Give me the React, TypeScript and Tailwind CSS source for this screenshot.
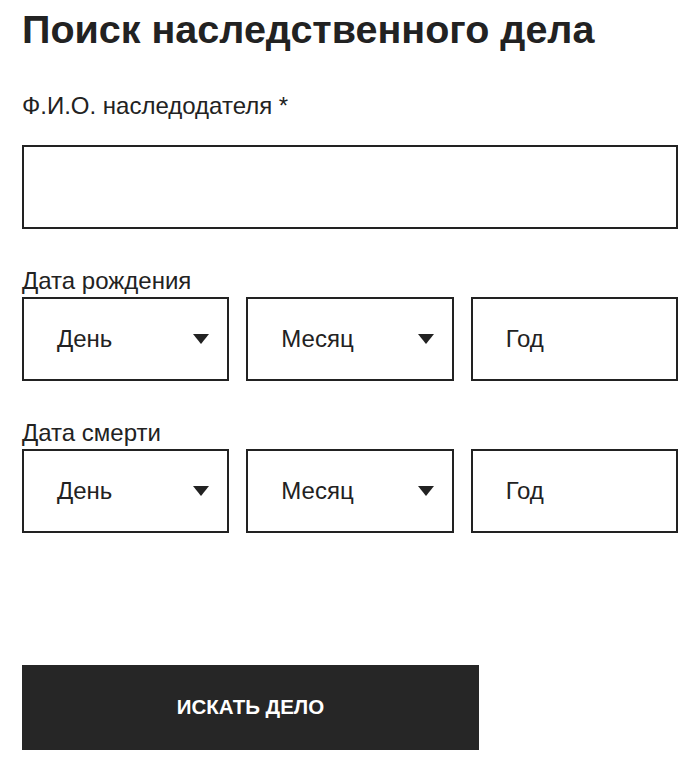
const font = { fontFamily: '"Liberation Sans", Arial, sans-serif' };

const boxClass =
  "flex h-[84px] items-center border-2 border-[#222] bg-white pl-[33px] pr-[18px] text-[24px] text-[#222]";

function Caret() {
  return (
    <svg width="16" height="10" viewBox="0 0 16 10" aria-hidden>
      <path d="M0 0 H16 L8 10 Z" fill="#222" />
    </svg>
  );
}

function SelectBox({ label }: { label: string }) {
  return (
    <div className={`${boxClass} justify-between`}>
      <span>{label}</span>
      <Caret />
    </div>
  );
}

function DateRow({ title }: { title: string }) {
  return (
    <div>
      <p className="text-[24px] leading-[28px] text-[#222]">{title}</p>
      <div className="mt-[2px] grid grid-cols-3 gap-[17px]">
        <SelectBox label="День" />
        <SelectBox label="Месяц" />
        <div className={boxClass}>Год</div>
      </div>
    </div>
  );
}

export default function App() {
  return (
    <div className="min-h-[772px] w-[700px] bg-white pl-[22px] pr-[22px] pt-[6px]" style={font}>
      <h1 className="text-[39.5px] font-bold leading-[46px] text-[#222]">Поиск наследственного дела</h1>

      <p className="mt-[40px] text-[24px] leading-[28px] text-[#222]">Ф.И.О. наследодателя *</p>
      <div className="mt-[25px] h-[84px] border-2 border-[#222] bg-white" />

      <div className="mt-[38px]">
        <DateRow title="Дата рождения" />
      </div>
      <div className="mt-[38px]">
        <DateRow title="Дата смерти" />
      </div>

      <button
        type="button"
        className="mt-[132px] flex h-[85px] w-[457px] items-center justify-center bg-[#262626] text-[20.5px] font-bold text-white"
      >
        ИСКАТЬ ДЕЛО
      </button>
    </div>
  );
}
